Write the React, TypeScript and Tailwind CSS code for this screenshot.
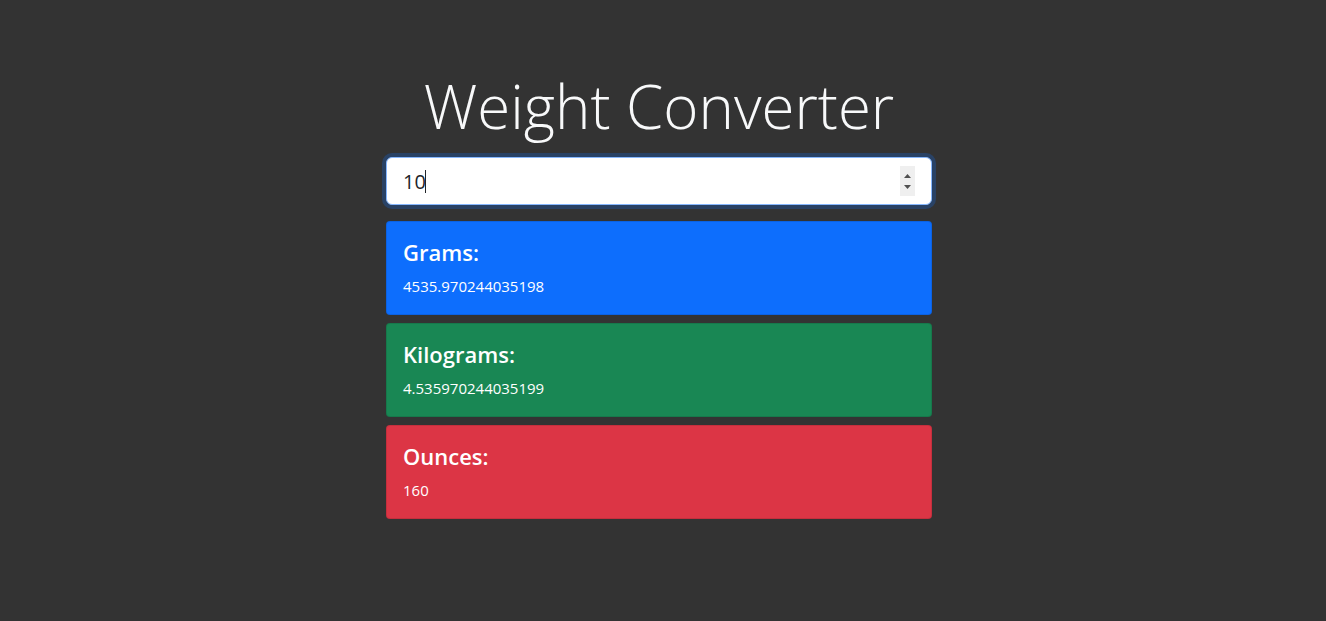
import { useState } from 'react';

const results = [
  { label: 'Grams:', value: '4535.970244035198', color: 'bg-[#0d6efd]' },
  { label: 'Kilograms:', value: '4.535970244035199', color: 'bg-[#198754]' },
  { label: 'Ounces:', value: '160', color: 'bg-[#dc3545]' },
];

export default function App() {
  const [pounds, setPounds] = useState('10');

  return (
    <div className="min-h-screen bg-[#333333] pr-2 font-['Open_Sans',sans-serif] text-white">
      <div className="mx-auto w-[546px] pt-[69px]">
        <h1 className="mb-[13px] text-center text-[60px] font-light leading-[75px] text-[#f8f9fa]">
          Weight Converter
        </h1>
        <div className="relative">
          <input
            type="number"
            autoFocus
            value={pounds}
            onChange={(e) => setPounds(e.target.value)}
            className="block h-12 w-full appearance-none rounded-[6px] border border-[#86b7fe] bg-white px-4 text-[20px] text-[#212529] caret-transparent shadow-[0_0_0_4px_rgba(13,110,253,0.25)] outline-none [&::-webkit-inner-spin-button]:appearance-none [&::-webkit-outer-spin-button]:appearance-none"
          />
          <span className="pointer-events-none absolute left-[39px] top-[13px] h-[23px] w-px bg-[#212529]" />
          {/* spinner */}
          <div className="pointer-events-none absolute left-[514px] top-[9px] flex h-[30px] w-[15px] flex-col items-center justify-center gap-[7px] bg-[#efefef]">
            <svg width="7" height="4" viewBox="0 0 7 4">
              <path d="M3.5 0 L7 4 L0 4 Z" fill="#505050" />
            </svg>
            <svg width="7" height="4" viewBox="0 0 7 4">
              <path d="M0 0 L7 0 L3.5 4 Z" fill="#505050" />
            </svg>
          </div>
        </div>
        <div className="mt-4 flex flex-col gap-2">
          {results.map((r) => (
            <div key={r.label} className={`rounded-[4px] border border-black/10 p-4 ${r.color}`}>
              <h4 className="mb-2 text-[22px] font-semibold leading-[28px]">{r.label}</h4>
              <p className="text-[15px] leading-6">{r.value}</p>
            </div>
          ))}
        </div>
      </div>
    </div>
  );
}
